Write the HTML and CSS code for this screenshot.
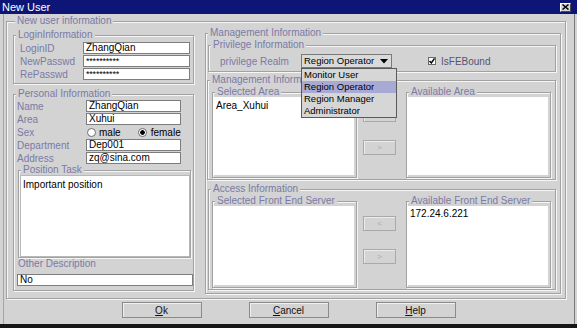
FILE: index.html
```html
<!DOCTYPE html>
<html>
<head>
<meta charset="utf-8">
<title>New User</title>
<link rel="stylesheet" href="styles.css">
</head>
<body>
<div class="window">
  <div class="titlebar">
    <span class="title">New User</span>
    <span class="close"><svg width="7" height="6" viewBox="0 0 7 6"><path d="M0.5 0.5 L6.5 5.5 M6.5 0.5 L0.5 5.5" stroke="#000" stroke-width="1.5"/></svg></span>
  </div>

  <fieldset class="group outer">
    <legend>New user information</legend>
    <div class="columns">

      <div class="leftcol">
        <fieldset class="group login">
          <legend>LoginInformation</legend>
          <div class="form">
            <div class="row"><label>LoginID</label><span class="field">ZhangQian</span></div>
            <div class="row"><label>NewPasswd</label><span class="field pass">**********</span></div>
            <div class="row"><label>RePasswd</label><span class="field pass">**********</span></div>
          </div>
        </fieldset>

        <fieldset class="group personal">
          <legend>Personal Information</legend>
          <div class="form">
            <div class="row"><label>Name</label><span class="field">ZhangQian</span></div>
            <div class="row"><label>Area</label><span class="field">Xuhui</span></div>
            <div class="row">
              <label>Sex</label>
              <span class="radio"></span><span class="opt">male</span>
              <span class="radio on"></span><span class="opt">female</span>
            </div>
            <div class="row"><label>Department</label><span class="field">Dep001</span></div>
            <div class="row"><label>Address</label><span class="field">zq@sina.com</span></div>
          </div>
          <fieldset class="group task">
            <legend>Position Task</legend>
            <div class="area">Important position</div>
          </fieldset>
          <div class="otherlabel">Other Description</div>
          <span class="field other">No</span>
        </fieldset>
      </div>

      <div class="rightcol">
        <fieldset class="group manage">
          <legend>Management Information</legend>

          <fieldset class="group privilege">
            <legend>Privilege Information</legend>
            <div class="privrow">
              <span class="privlabel">privilege Realm</span>
              <div class="combo">
                <span class="combotext">Region Operator</span>
                <svg width="8" height="5" viewBox="0 0 8 5"><path d="M0 0 H8 L4 4.5 Z" fill="#000"/></svg>
                <ul class="droplist">
                  <li>Monitor User</li>
                  <li class="selected">Region Operator</li>
                  <li>Region Manager</li>
                  <li>Administrator</li>
                </ul>
              </div>
              <span class="check"><svg width="6" height="6" viewBox="0 0 6 6"><path d="M0.5 3 L2.3 5 L5.5 0.5" stroke="#000" stroke-width="1.4" fill="none"/></svg></span>
              <span class="checklabel">IsFEBound</span>
            </div>
          </fieldset>

          <fieldset class="group section areas">
            <legend>Management Information</legend>
            <div class="transfer">
              <fieldset class="group listbox">
                <legend>Selected Area</legend>
                <div class="list">Area_Xuhui</div>
              </fieldset>
              <div class="movers">
                <button class="mover">&lt;</button>
                <button class="mover">&gt;</button>
              </div>
              <fieldset class="group listbox">
                <legend>Available Area</legend>
                <div class="list"></div>
              </fieldset>
            </div>
          </fieldset>

          <fieldset class="group section access">
            <legend>Access Information</legend>
            <div class="transfer">
              <fieldset class="group listbox tall">
                <legend>Selected Front End Server</legend>
                <div class="list"></div>
              </fieldset>
              <div class="movers">
                <button class="mover">&lt;</button>
                <button class="mover">&gt;</button>
              </div>
              <fieldset class="group listbox tall">
                <legend>Available Front End Server</legend>
                <div class="list">172.24.6.221</div>
              </fieldset>
            </div>
          </fieldset>
        </fieldset>
      </div>

    </div>
  </fieldset>

  <div class="actions">
    <button class="btn"><u>O</u>k</button>
    <button class="btn"><u>C</u>ancel</button>
    <button class="btn"><u>H</u>elp</button>
  </div>
</div>
</body>
</html>
```

FILE: styles.css
```css
html, body{
margin: 0;
padding: 0;
}
body{
width: 577px;
height: 328px;
overflow: hidden;
background: #d3d3d3;
font-family: "Liberation Sans", Arial, sans-serif;
font-size: 10px;
color: #000;
}

.window{
box-sizing: border-box;
width: 577px;
height: 328px;
border-bottom: 4px solid #161616;
background: #d3d3d3;
box-shadow: inset -2px 0 0 #d3d3d3, inset -3px 0 0 #7c7c7c, inset 3px 0 0 #d3d3d3, inset 4px 0 0 #a4a4a4;
}

/* title bar */
.titlebar{
height: 14px;
background: #0d1677;
color: #fff;
display: flex;
align-items: center;
justify-content: space-between;
padding: 0 6px 0 2px;
font-size: 11px;
}
.close{
box-sizing: border-box;
width: 11px;
height: 9px;
background: #d6d6d6;
border: 1px solid;
border-color: #fff #4a4a4a #4a4a4a #fff;
display: flex;
align-items: center;
justify-content: center;
}

/* etched group boxes */
.group{
box-sizing: border-box;
margin: 0;
padding: 0;
min-width: 0;
border: 1px solid #a2a2a2;
box-shadow: inset 1px 1px 0 #f6f6f6, 1px 1px 0 #f6f6f6;
}
.group > legend{
padding: 0 2px;
margin-left: 2px;
line-height: 10px;
font-size: 10px;
color: #7a7aa6;
background: #d3d3d3;
white-space: nowrap;
}

.outer{
margin: 2px 0 0 6px;
width: 560px;
height: 283px;
padding: 0 4px 0 6px;
}
.columns{
display: flex;
gap: 11px;
}

/* left column */
.leftcol{
width: 181px;
padding-top: 4px;
}
.login{
height: 54px;
}
.login .form{
padding: 2px 0 0 6px;
}
.row{
display: flex;
align-items: center;
height: 12px;
margin-bottom: 1px;
}
.row label{
color: #7a7aa6;
}
.login .row label{
width: 63px;
}
.field{
box-sizing: border-box;
display: block;
height: 12px;
line-height: 10px;
padding-left: 2px;
background: #fff;
border: 1px solid #7d7d7d;
white-space: nowrap;
}
.login .field{
width: 107px;
}
.pass{
font-size: 9px;
letter-spacing: -0.2px;
}

.personal{
margin-top: 5px;
height: 202px;
}
.personal .form{
padding: 1px 0 0 3px;
}
.personal .row label{
width: 69px;
}
.personal .field{
width: 95px;
}
.radio{
box-sizing: border-box;
width: 9px;
height: 9px;
border: 1px solid #6e6e6e;
border-radius: 50%;
background: #fff;
margin-left: 1px;
}
.radio.on{
background: radial-gradient(circle, #000 0, #000 2px, #fff 2.6px);
margin-left: 17px;
}
.opt{
margin-left: 3px;
}
.radio.on + .opt{
margin-left: 4px;
}

.task{
margin: 0 0 0 4px;
width: 173px;
height: 93px;
}
.area{
box-sizing: border-box;
height: 82px;
margin: 0 0 0 1px;
border: 1px solid #b8b8b8;
background: #fff;
padding: 3px 2px;
}
.otherlabel{
margin-left: 4px;
height: 12px;
line-height: 12px;
color: #7a7aa6;
}
.field.other{
margin: 4px 0 0 3px;
width: 176px;
}

/* right column */
.rightcol{
width: 356px;
padding-top: 2px;
}
.manage{
height: 266px;
}
.privilege{
margin: 2px 4px 0 2px;
height: 32px;
}
.privrow{
display: flex;
align-items: center;
height: 14px;
padding: 4px 0 0 11px;
}
.privlabel{
width: 81px;
color: #7a7aa6;
white-space: nowrap;
}
.combo{
position: relative;
box-sizing: border-box;
width: 91px;
height: 14px;
border: 1px solid #7a7a7a;
background: #dadada;
display: flex;
align-items: center;
justify-content: space-between;
padding: 0 3px 0 2px;
white-space: nowrap;
}
.combotext{
font-size: 9.5px;
line-height: 12px;
}
.droplist{
position: absolute;
top: 13px;
left: -1px;
width: 96px;
box-sizing: border-box;
margin: 0;
padding: 0;
list-style: none;
border: 1px solid #5a5a5a;
background: #d6d6d6;
z-index: 2;
}
.droplist li{
height: 12px;
line-height: 12px;
padding-left: 2px;
font-size: 9.5px;
}
.droplist li.selected{
background: #a9a9d6;
}
.check{
box-sizing: border-box;
width: 8px;
height: 8px;
margin-left: 36px;
border: 1px solid #6a6a6a;
background: #fff;
display: flex;
align-items: center;
justify-content: center;
}
.checklabel{
margin-left: 5px;
color: #545476;
}

.section{
margin: 3px 4px 0 1px;
height: 105px;
}
.section.access{
margin: 4px 4px 0 2px;
width: 348px;
height: 106px;
}
.transfer{
display: flex;
padding-left: 4px;
}
.access .transfer{
padding-left: 3px;
}
.listbox{
margin-top: 2px;
width: 145px;
height: 91px;
padding: 0 2px 2px 0;
}
.listbox.tall{
height: 92px;
}
.listbox + .movers + .listbox{
margin-left: 10px;
}
.list{
box-sizing: border-box;
height: 100%;
background: #fff;
padding: 3px 3px;
line-height: 12px;
}
.tall .list{
padding-top: 2px;
}
.movers{
display: flex;
flex-direction: column;
gap: 18px;
padding-top: 22px;
margin-left: 6px;
}
.mover{
box-sizing: border-box;
width: 33px;
height: 15px;
margin: 0;
padding: 0;
font-family: inherit;
font-size: 8px;
color: #a9a9a9;
background: #d3d3d3;
border: 1px solid #a9a9a9;
box-shadow: inset 1px 1px 0 #ececec;
}

/* buttons */
.actions{
display: flex;
justify-content: center;
gap: 47px;
margin-top: 3px;
}
.btn{
box-sizing: border-box;
width: 80px;
height: 16px;
margin: 0;
padding: 0;
font-family: inherit;
font-size: 10px;
color: #111;
background: #d3d3d3;
border: 1px solid #8a8a8a;
box-shadow: inset 1px 1px 0 #f0f0f0;
}
```
